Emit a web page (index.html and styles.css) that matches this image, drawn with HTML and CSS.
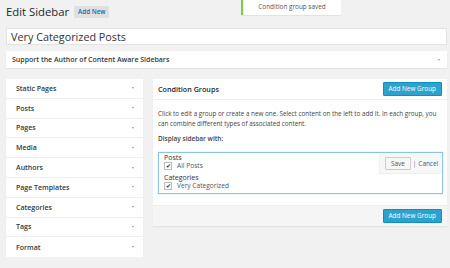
FILE: index.html
```html
<!DOCTYPE html>
<html lang="en">
<head>
    <meta charset="UTF-8">
    <title>Edit Sidebar</title>
    <link rel="stylesheet" href="styles.css">
</head>
<body>
    <div class="notice">Condition group saved</div>

    <div class="wrap">
        <div class="page-head">
            <h1>Edit Sidebar</h1>
            <span class="add-new">Add New</span>
        </div>

        <div class="title-input">Very Categorized Posts</div>

        <div class="support-box">
            <span>Support the Author of Content Aware Sidebars</span>
            <span class="arrow"></span>
        </div>

        <div class="columns">
            <div class="side-list">
                <div class="side-item"><span>Static Pages</span><span class="arrow"></span></div>
                <div class="side-item"><span>Posts</span><span class="arrow"></span></div>
                <div class="side-item"><span>Pages</span><span class="arrow"></span></div>
                <div class="side-item"><span>Media</span><span class="arrow"></span></div>
                <div class="side-item"><span>Authors</span><span class="arrow"></span></div>
                <div class="side-item"><span>Page Templates</span><span class="arrow"></span></div>
                <div class="side-item"><span>Categories</span><span class="arrow"></span></div>
                <div class="side-item"><span>Tags</span><span class="arrow"></span></div>
                <div class="side-item"><span>Format</span><span class="arrow"></span></div>
            </div>

            <div class="panel">
                <div class="panel-head">
                    <span class="panel-title">Condition Groups</span>
                    <span class="blue-button">Add New Group</span>
                </div>
                <div class="panel-body">
                    <p class="intro">Click to edit a group or create a new one. Select content on the left to add it. In each group, you can combine different types of associated content.</p>
                    <p class="display-label">Display sidebar with:</p>

                    <div class="group-box">
                        <div class="group-list">
                            <div class="group-type">Posts</div>
                            <label class="group-entry"><span class="check">&#10004;</span>All Posts</label>
                            <div class="group-type">Categories</div>
                            <label class="group-entry"><span class="check">&#10004;</span>Very Categorized</label>
                        </div>
                        <div class="group-actions">
                            <span class="save-button">Save</span>
                            <span class="sep">|</span>
                            <span class="cancel">Cancel</span>
                        </div>
                    </div>
                </div>
                <div class="panel-foot">
                    <span class="blue-button">Add New Group</span>
                </div>
            </div>
        </div>
    </div>
</body>
</html>
```

FILE: styles.css
```css
body {
    margin: 0;
    background: #f1f1f1;
    font-family: "Open Sans", "Liberation Sans", sans-serif;
    color: #444;
}
.wrap {
    padding: 4px 3px 0 6px;
}
.notice {
    position: absolute;
    top: 0;
    left: 241px;
    width: 98px;
    height: 15px;
    background: #fff;
    border-left: 2px solid #7ad03a;
    font-size: 6.4px;
    line-height: 14px;
    text-align: center;
    color: #555;
    box-shadow: 0 1px 1px rgba(0,0,0,0.06);
}
.page-head {
    display: flex;
    align-items: center;
    height: 15px;
}
h1 {
    margin: 0;
    font-size: 11.3px;
    font-weight: 400;
    color: #23282d;
    line-height: 15px;
}
.add-new {
    margin-left: 5px;
    background: #e0e0e0;
    color: #0073aa;
    font-size: 6.3px;
    font-weight: 600;
    padding: 0 4px;
    line-height: 12px;
    border-radius: 1px;
}
.title-input {
    margin-top: 9px;
    height: 17px;
    background: #fff;
    border: 1px solid #e3e3e3;
    box-sizing: border-box;
    padding-left: 4px;
    font-size: 10.8px;
    line-height: 15px;
    color: #333;
}
.support-box {
    margin-top: 6px;
    height: 17px;
    background: #fff;
    display: flex;
    align-items: center;
    justify-content: space-between;
    padding: 0 7px 0 6px;
    font-size: 7px;
    font-weight: 600;
    color: #32373c;
    box-shadow: 0 1px 1px rgba(0,0,0,0.05);
}
.arrow {
    width: 0;
    height: 0;
    border-left: 1.5px solid transparent;
    border-right: 1.5px solid transparent;
    border-top: 2px solid #999;
}
.columns {
    display: flex;
    gap: 10px;
    margin-top: 11px;
    align-items: flex-start;
}
.side-list {
    width: 137px;
    background: #fff;
    box-shadow: 0 1px 1px rgba(0,0,0,0.06);
}
.side-item {
    height: 19.8px;
    box-sizing: border-box;
    border-bottom: 1px solid #eee;
    display: flex;
    align-items: center;
    justify-content: space-between;
    padding: 0 9px 0 10px;
    font-size: 7px;
    font-weight: 600;
    color: #32373c;
}
.side-item:last-child {
    border-bottom: none;
}
.panel {
    flex: 1;
    background: #fff;
    box-shadow: 0 1px 1px rgba(0,0,0,0.06);
}
.panel-head {
    height: 20px;
    display: flex;
    align-items: center;
    justify-content: space-between;
    padding: 0 5px;
    border-bottom: 1px solid #eee;
}
.panel-title {
    font-size: 7.2px;
    font-weight: 600;
    color: #23282d;
}
.blue-button {
    background: #2ea2cc;
    border: 1px solid #0e8fbe;
    color: #fff;
    font-size: 6.4px;
    line-height: 12px;
    padding: 0 5px;
    border-radius: 1px;
}
.panel-body {
    padding: 9px 4px 11px 5px;
}
.intro {
    margin: 0;
    font-size: 6.3px;
    line-height: 10px;
    color: #444;
}
.display-label {
    margin: 5px 0 0;
    font-size: 6.5px;
    font-weight: 600;
    line-height: 10px;
    color: #444;
}
.group-box {
    margin-top: 8px;
    height: 42px;
    box-sizing: border-box;
    border: 1px solid #8ec3e6;
    box-shadow: 0 0 1px rgba(30,140,190,0.4);
    display: flex;
    justify-content: space-between;
    align-items: flex-start;
}
.group-list {
    padding: 1px 0 0 5px;
}
.group-type {
    font-size: 7px;
    line-height: 8px;
    color: #333;
}
.group-entry {
    display: flex;
    align-items: center;
    font-size: 6.6px;
    line-height: 8px;
    color: #555;
    margin-bottom: 4px;
}
.check {
    width: 6px;
    height: 6px;
    border: 1px solid #bbb;
    background: #fff;
    font-size: 6px;
    line-height: 6px;
    color: #222;
    text-align: center;
    margin-right: 5px;
}
.group-actions {
    height: 20px;
    width: 62px;
    box-sizing: border-box;
    background: #f7f7f7;
    display: flex;
    align-items: center;
    padding-left: 5px;
    box-shadow: -1px 1px 1px rgba(0,0,0,0.06);
    font-size: 6.4px;
}
.save-button {
    background: #f7f7f7;
    border: 1px solid #ccc;
    line-height: 11px;
    padding: 0 5px;
    color: #555;
    border-radius: 1px;
}
.sep {
    margin: 0 2px 0 2px;
    color: #777;
}
.cancel {
    color: #0073aa;
}
.panel-foot {
    height: 20px;
    background: #f5f5f5;
    border-top: 1px solid #eee;
    display: flex;
    align-items: center;
    justify-content: flex-end;
    padding: 0 5px;
}
```
